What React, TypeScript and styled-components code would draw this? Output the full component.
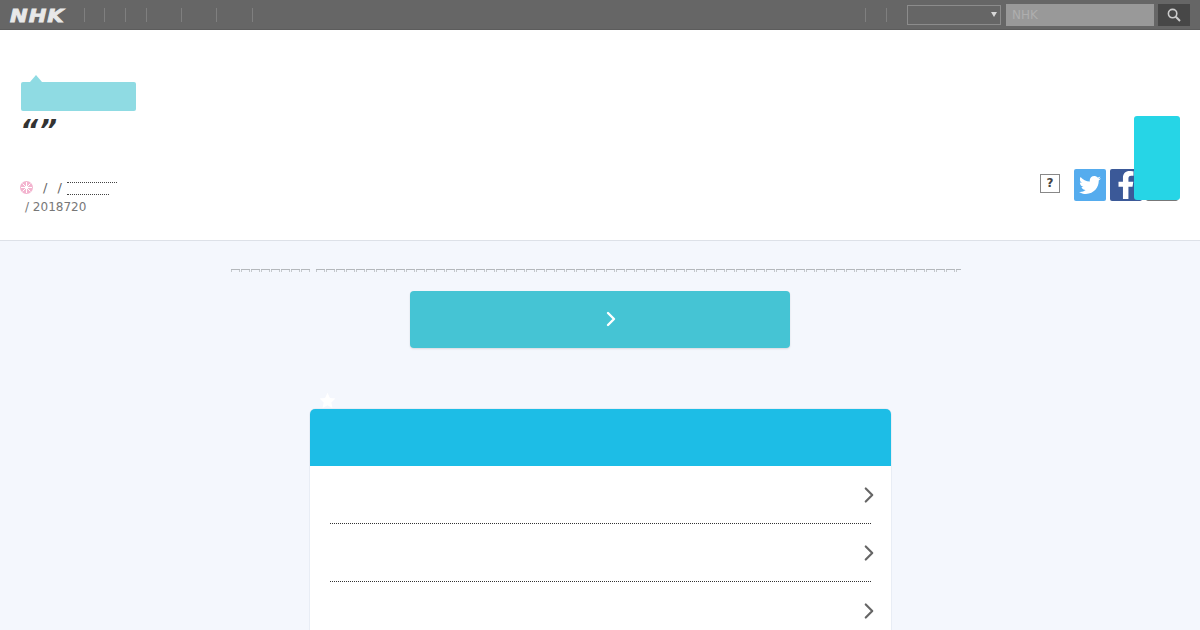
import React from "react";
import styled, { createGlobalStyle } from "styled-components";
import { ChevronRight } from "lucide-react";
import { FaTwitter, FaFacebookF } from "react-icons/fa";

const GlobalStyle = createGlobalStyle`
  html, body {
    margin: 0;
    height: 630px;
    overflow: hidden;
    background: #f4f7fd;
    font-family: "DejaVu Sans", sans-serif;
  }
`;

const TopBar = styled.header`
  height: 30px;
  box-sizing: border-box;
  background: #666;
  border-bottom: 1px solid #5c5c5c;
  display: flex;
  align-items: center;
  padding: 0 10px;
`;

const Logo = styled.span`
  width: 74px;
  color: #e8e8e8;
  font: italic 900 17px/1 "DejaVu Sans", sans-serif;
  letter-spacing: 0.8px;
  -webkit-text-stroke: 0.8px #e8e8e8;
  transform: translateY(1.5px) scaleX(1.24);
  transform-origin: left center;
`;

const NavItem = styled.span<{ $w: number }>`
  width: ${({ $w }) => $w}px;
  height: 14px;
  box-sizing: border-box;
  border-left: 1px solid #7f7f7f;
`;

const Spacer = styled.div`
  flex: 1;
`;

const FakeSelect = styled.div`
  width: 94px;
  height: 20px;
  box-sizing: border-box;
  border: 1px solid #8c8c8c;
  margin-right: 5px;
  display: flex;
  align-items: center;
  justify-content: flex-end;
  padding-right: 3px;

  &::after {
    content: "";
    border: 3.5px solid transparent;
    border-top: 5px solid #d8d8d8;
    border-bottom: 0;
  }
`;

const SearchBox = styled.div`
  width: 148px;
  height: 22px;
  box-sizing: border-box;
  background: #999;
  color: #aeaeae;
  font-size: 12px;
  line-height: 22px;
  padding-left: 6px;
  margin-right: 4px;
`;

const SearchBtn = styled.div`
  width: 32px;
  height: 22px;
  background: #474747;
  display: flex;
  align-items: center;
  justify-content: center;
`;

const Hero = styled.section`
  position: relative;
  height: 210px;
  background: #fff;
  border-bottom: 1px solid #dde1e8;
  display: flex;
  align-items: flex-start;
  justify-content: space-between;
  padding: 0 20px;
`;

const HeroLeft = styled.div`
  padding-top: 52px;
`;

const Tag = styled.div`
  position: relative;
  width: 115px;
  height: 29px;
  margin-left: 1px;
  background: #8fdbe3;
  border-radius: 2px;

  &::before {
    content: "";
    position: absolute;
    left: 9px;
    top: -7px;
    border: 6px solid transparent;
    border-bottom: 7px solid #8fdbe3;
    border-top: 0;
  }
`;

const Quotes = styled.div`
  margin: 5px 0 0 0;
  height: 30px;
  color: #333;
  font: italic 700 28px/30px "DejaVu Sans", sans-serif;
  letter-spacing: 1px;
`;

const Crumbs = styled.div`
  margin-top: 35px;
  width: 110px;
  color: #777;
  font-size: 12px;
`;

const CrumbRow = styled.div<{ $h: number }>`
  height: ${({ $h }) => $h}px;
  display: flex;
  align-items: center;
`;

const Slash = styled.span`
  color: #666;
  font-size: 13px;
  margin-left: 10px;
`;

const Dotted = styled.span<{ $w: number; $left: number; $up: number }>`
  width: ${({ $w }) => $w}px;
  height: 1px;
  margin-left: ${({ $left }) => $left}px;
  border-top: 1px dotted #444;
  transform: translateY(${({ $up }) => $up}px);
`;

const DateLine = styled.div`
  margin-top: 3px;
  margin-left: 5px;
  font-size: 12px;
  line-height: 15px;
`;

const ShareRow = styled.div`
  display: flex;
  align-items: center;
  padding-top: 139px;
  padding-right: 2px;
`;

const Help = styled.div`
  width: 20px;
  height: 19px;
  box-sizing: border-box;
  border: 1px solid #888;
  color: #444;
  font: 700 12px/17px "DejaVu Sans", sans-serif;
  text-align: center;
  margin: 0 14px 4px 0;
`;

const ShareBtn = styled.div<{ $bg: string }>`
  width: 32px;
  height: 32px;
  margin-right: 4px;
  border-radius: 2px;
  background: ${({ $bg }) => $bg};
  color: #fff;
  display: flex;
  align-items: center;
  justify-content: center;
  overflow: hidden;
`;

const LastBtn = styled(ShareBtn)`
  margin-right: 0;
  border-bottom: 1px solid #777;
  box-sizing: border-box;
`;

const Floater = styled.div`
  position: absolute;
  left: 1134px;
  top: 86px;
  width: 46px;
  height: 84px;
  background: #26d5e6;
  border-radius: 3px;
`;

const Body = styled.main`
  display: flex;
  flex-direction: column;
  align-items: center;
  padding-top: 28px;
`;

const TofuLine = styled.div`
  width: 730px;
  height: 3px;
  margin-right: 8px;
  display: flex;
  gap: 6px;
`;

const TofuRun = styled.div<{ $w: number }>`
  width: ${({ $w }) => $w}px;
  height: 3px;
  border-top: 1px solid #b4b8bc;
  box-sizing: border-box;
  background: repeating-linear-gradient(90deg, #c4c8cc 0 1px, transparent 1px 8px, #c4c8cc 8px 9px, transparent 9px 10px);
  mask-image: repeating-linear-gradient(90deg, #000 0 9px, transparent 9px 10px);
`;

const CtaButton = styled.div`
  width: 380px;
  height: 57px;
  margin-top: 19px;
  border-radius: 4px;
  background: #45c4d4;
  box-shadow: 0 1px 2px rgba(0, 0, 0, 0.12);
  color: #fff;
  display: flex;
  align-items: center;
  justify-content: center;
  padding: 0 0 2px 22px;
  box-sizing: border-box;
`;

const Card = styled.section`
  position: relative;
  width: 581px;
  margin-top: 61px;
  margin-left: 1px;
  background: #fff;
  border-radius: 6px 6px 0 0;
  box-shadow: 0 0 0 1px #e8edf5;
`;

const CardStar = styled.svg`
  position: absolute;
  left: 9px;
  top: -17px;
  width: 17px;
  height: 17px;
  fill: #fff;
`;

const CardHead = styled.div`
  height: 57px;
  background: #1dbde6;
  border-radius: 5px 5px 0 0;
`;

const Row = styled.div`
  height: 57px;
  margin: 0 20px;
  border-bottom: 1px dotted #333;
  display: flex;
  align-items: center;
  justify-content: flex-end;
  color: #666;

  &:last-child {
    border-bottom: 0;
  }

  svg {
    margin-right: -11px;
  }
`;

const navWidths = [20, 21, 21, 35, 35, 36, 1];

export default function App() {
  return (
    <>
      <GlobalStyle />
      <TopBar>
        <Logo>NHK</Logo>
        {navWidths.map((w, i) => (
          <NavItem key={i} $w={w} />
        ))}
        <Spacer />
        <NavItem $w={21} />
        <NavItem $w={21} />
        <FakeSelect />
        <SearchBox>NHK</SearchBox>
        <SearchBtn>
          <svg width="14" height="14" viewBox="0 0 14 14" fill="none" stroke="#ccc" strokeWidth="1.6">
            <circle cx="5.6" cy="5.6" r="4.2" />
            <path d="M8.8 8.8L13 13" strokeWidth="2" />
          </svg>
        </SearchBtn>
      </TopBar>
      <Hero>
        <HeroLeft>
          <Tag />
          <Quotes>“”</Quotes>
          <Crumbs>
            <CrumbRow $h={13}>
              <svg width="13" height="13" viewBox="0 0 13 13">
                <circle cx="6.5" cy="6.5" r="6.5" fill="#f3b4cf" />
                <path d="M6.5 1v11M1 6.5h11M2.6 2.6l7.8 7.8M10.4 2.6l-7.8 7.8" stroke="#fff" strokeWidth="1" />
              </svg>
              <Slash>/</Slash>
              <Slash>/</Slash>
              <Dotted $w={50} $left={5} $up={-5} />
            </CrumbRow>
            <CrumbRow $h={3}>
              <Dotted $w={42} $left={47} $up={-1} />
            </CrumbRow>
            <DateLine>/ 2018720</DateLine>
          </Crumbs>
        </HeroLeft>
        <ShareRow>
          <Help>?</Help>
          <ShareBtn $bg="#55acee">
            <FaTwitter size={22} />
          </ShareBtn>
          <ShareBtn $bg="#3b5998">
            <FaFacebookF size={28} />
          </ShareBtn>
          <LastBtn $bg="#fff" />
        </ShareRow>
        <Floater />
      </Hero>
      <Body>
        <TofuLine>
          <TofuRun $w={79} />
          <TofuRun $w={645} />
        </TofuLine>
        <CtaButton>
          <ChevronRight size={24} strokeWidth={2.4} />
        </CtaButton>
        <Card>
          <CardStar viewBox="0 0 24 24">
            <path d="M12 1l3.4 7.4 7.8.9-5.8 5.4 1.6 8L12 18.6 5 22.7l1.6-8L.8 9.3l7.8-.9z" />
          </CardStar>
          <CardHead />
          <Row>
            <ChevronRight size={26} strokeWidth={2} />
          </Row>
          <Row>
            <ChevronRight size={26} strokeWidth={2} />
          </Row>
          <Row>
            <ChevronRight size={26} strokeWidth={2} />
          </Row>
        </Card>
      </Body>
    </>
  );
}
